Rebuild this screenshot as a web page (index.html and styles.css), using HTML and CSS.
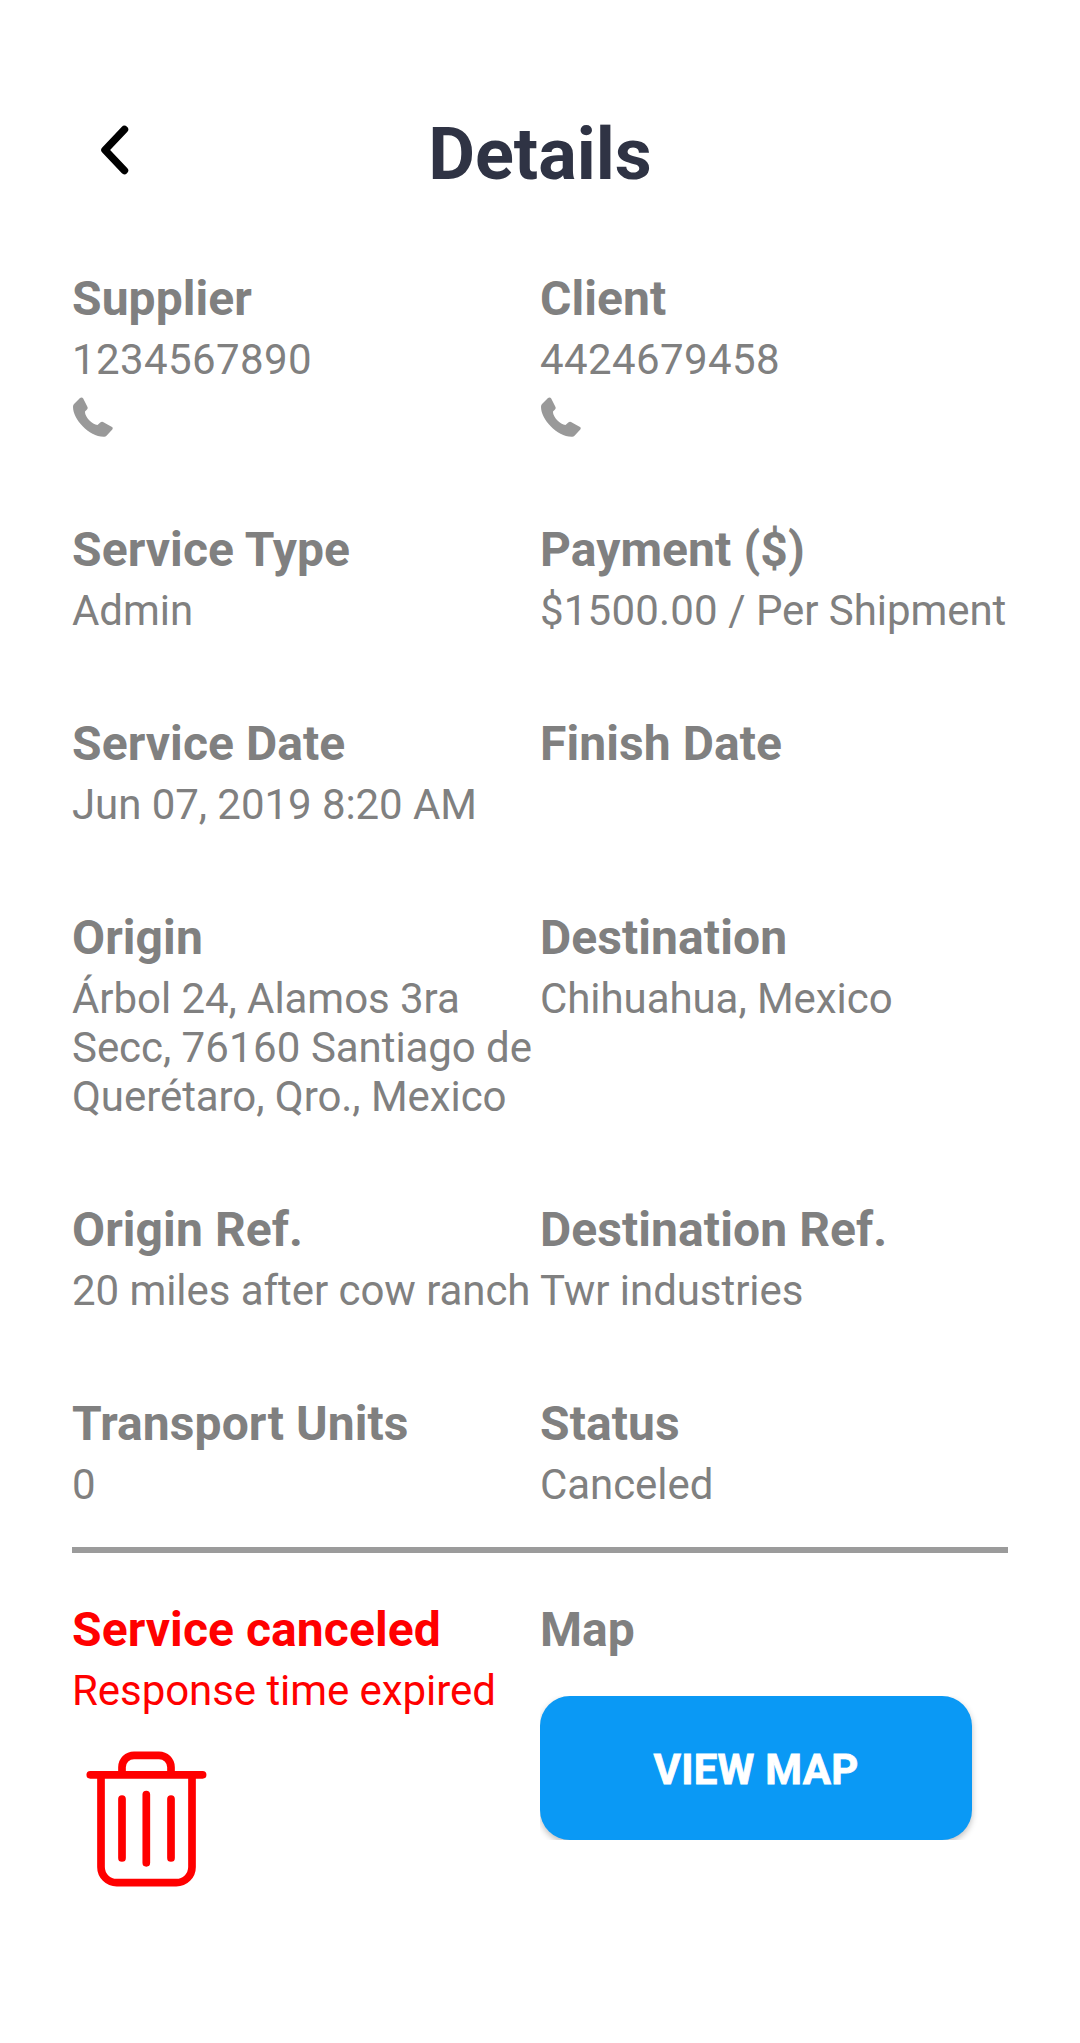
FILE: index.html
```html
<!DOCTYPE html>
<html lang="en">
<head>
<meta charset="utf-8">
<title>Details</title>
<link rel="stylesheet" href="styles.css">
</head>
<body>
<header class="header">
  <svg class="back" viewBox="0 0 30 50"><path d="M24.4 4.5L5 25l19.4 20.5"/></svg>
  <h1 class="title">Details</h1>
</header>
<main class="details">
  <section class="row row-contact">
    <div class="cell"><h2>Supplier</h2><p class="number">1234567890</p><svg class="phone" viewBox="0 0 42 41"><path d="M8 1Q10-.3 11.2 1.5L15.5 10Q16 11.5 15 12.5L13 14.5C12.5 19.5 20 27.5 25.5 28L28 25.7Q29.5 24.5 31 25L40 30Q41.3 31 40.3 32.5L34.5 38.7Q33.5 39.8 32 39.7C17 40 1 22 1 10Q1 8 2 7z"/></svg></div>
    <div class="cell"><h2>Client</h2><p class="number">4424679458</p><svg class="phone" viewBox="0 0 42 41"><path d="M8 1Q10-.3 11.2 1.5L15.5 10Q16 11.5 15 12.5L13 14.5C12.5 19.5 20 27.5 25.5 28L28 25.7Q29.5 24.5 31 25L40 30Q41.3 31 40.3 32.5L34.5 38.7Q33.5 39.8 32 39.7C17 40 1 22 1 10Q1 8 2 7z"/></svg></div>
  </section>
  <section class="row">
    <div class="cell"><h2>Service Type</h2><p>Admin</p></div>
    <div class="cell"><h2>Payment ($)</h2><p><span class="number">$1500.00</span> / Per Shipment</p></div>
  </section>
  <section class="row">
    <div class="cell"><h2>Service Date</h2><p>Jun 07, 2019 8:20 AM</p></div>
    <div class="cell"><h2>Finish Date</h2></div>
  </section>
  <section class="row">
    <div class="cell"><h2>Origin</h2><p>Árbol 24, Alamos 3ra<br>Secc, <span class="number">76160</span> Santiago de<br>Querétaro, Qro., Mexico</p></div>
    <div class="cell"><h2>Destination</h2><p>Chihuahua, Mexico</p></div>
  </section>
  <section class="row">
    <div class="cell"><h2>Origin Ref.</h2><p>20 miles after cow ranch</p></div>
    <div class="cell"><h2>Destination Ref.</h2><p>Twr industries</p></div>
  </section>
  <section class="row row-last">
    <div class="cell"><h2>Transport Units</h2><p>0</p></div>
    <div class="cell"><h2>Status</h2><p>Canceled</p></div>
  </section>
  <section class="row row-actions">
    <div class="cell canceled"><h2>Service canceled</h2><p>Response time expired</p>
      <svg class="trash" viewBox="0 0 122 136"><path d="M4.300 23.800h112.300M36 23.800V16.300a12 12 0 0 1 12-12h25a12 12 0 0 1 12 12v7.500M15 23.800V116a15.700 15.700 0 0 0 15.700 15.700h59.600A15.700 15.700 0 0 0 106 116V23.800M36 48v59M60.300 43.600v68.200M85 48v59"/></svg></div>
    <div class="cell"><h2>Map</h2><div class="button-frame"><button class="map-button">VIEW MAP</button></div></div>
  </section>
</main>
</body>
</html>
```
FILE: styles.css
```css
body {
  margin: 0;
  background: #fff;
  color: #808080;
  font-family: Roboto, sans-serif;
}
.header {
  display: grid;
  grid-template-columns: 1fr auto 1fr;
  padding: 110px 100px 0;
  height: 90px;
}
.back {
  width: 30px;
  height: 50px;
  margin-top: 15px;
  fill: none;
  stroke: #000;
  stroke-width: 7.6;
  stroke-linecap: round;
  stroke-linejoin: round;
}
.title {
  margin: 0;
  color: #2f3344;
  font-size: 72px;
  line-height: 90px;
  font-weight: 700;
}
.details {
  padding: 69px 72px 0;
}
.row {
  display: grid;
  grid-template-columns: 468px 468px;
  padding-bottom: 79px;
}
.row-contact {
  padding-bottom: 82px;
}
.cell {
  white-space: nowrap;
}
.cell h2 {
  margin: 0;
  font-size: 48px;
  line-height: 60px;
  font-weight: 700;
  height: 61px;
  letter-spacing: .08px;
}
.cell p {
  margin: 0;
  font-size: 42px;
  line-height: 49px;
  padding-top: 5px;
  letter-spacing: -.06px;
}
.cell .number {
  letter-spacing: .4px;
}
.cell span.number {
  letter-spacing: .2px;
}
.phone {
  display: block;
  width: 42px;
  height: 41px;
  margin-top: 13px;
  fill: #999;
}
.row-last {
  padding-bottom: 38px;
  border-bottom: 6px solid #9b9b9b;
}
.row-actions {
  padding-top: 47px;
}
.canceled {
  color: #f00;
}
.trash {
  display: block;
  width: 122px;
  height: 136px;
  margin: 36px 0 0 14px;
  fill: none;
  stroke: #f00;
  stroke-width: 7.7;
  stroke-linecap: round;
}
.button-frame {
  width: 444px;
  height: 144px;
  margin-top: 35px;
  overflow: hidden;
}
.map-button {
  display: block;
  width: 432px;
  height: 144px;
  padding: 2px 0 0;
  border: 0;
  border-radius: 30px;
  background: #0a99f5;
  color: #fff;
  font: 700 42px Roboto, sans-serif;
  letter-spacing: .25px;
  -webkit-text-stroke: .8px #fff;
  box-shadow: 0 3px 6px rgba(0, 0, 0, .25);
}
```
